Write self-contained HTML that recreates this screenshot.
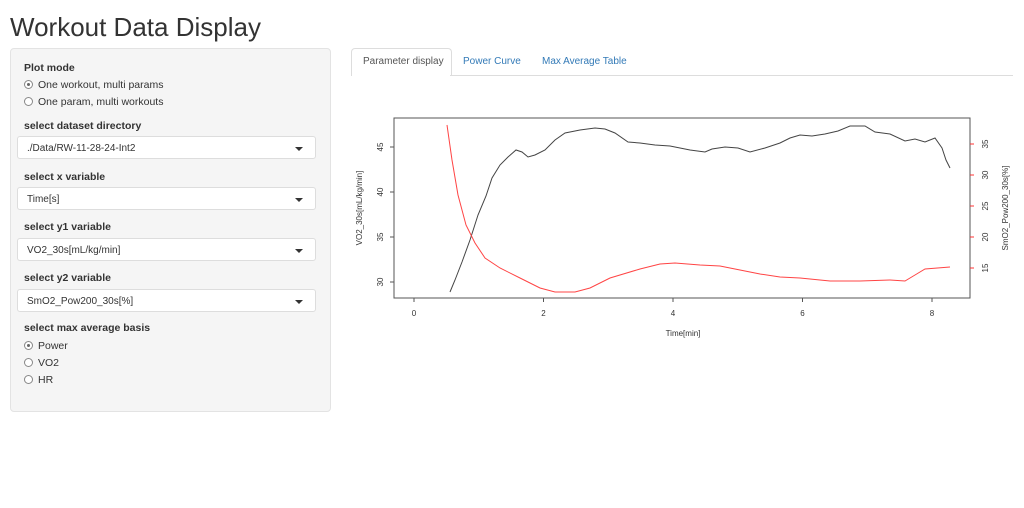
<!DOCTYPE html><html><head><style>
body{margin:0;width:1024px;height:508px;background:#fff;font-family:"Liberation Sans",sans-serif;color:#333;position:relative;overflow:hidden}
.a{position:absolute}
h1{position:absolute;left:10px;top:12px;margin:0;font-size:26px;font-weight:normal;color:#333}
.side{left:10px;top:48px;width:319px;height:362px;background:#f5f5f5;border:1px solid #e3e3e3;border-radius:4px}
.lb{font-size:10.5px;font-weight:bold;left:24px}
.rd{font-size:10.5px;left:24px}
.rd i{display:inline-block;width:7px;height:7px;border:1px solid #888;border-radius:50%;margin-right:5px;vertical-align:-1px;background:#fff;position:relative}
.rd i.on::after{content:"";position:absolute;left:2px;top:2px;width:3px;height:3px;border-radius:50%;background:#666}
.sel{left:17px;width:299px;height:23px;background:#fff;border:1px solid #ddd;border-radius:3px;font-size:10px;line-height:23px;box-sizing:border-box;padding-left:9px}
.sel::after{content:"";position:absolute;right:12px;top:10px;border-left:4px solid transparent;border-right:4px solid transparent;border-top:4px solid #333}
.tab{font-size:10px;top:56px}
</style></head><body>
<h1>Workout Data Display</h1>
<div class="a side"></div>
<div class="a lb" style="top:62px">Plot mode</div>
<div class="a rd" style="top:79px"><i class="on"></i>One workout, multi params</div>
<div class="a rd" style="top:96px"><i></i>One param, multi workouts</div>
<div class="a lb" style="top:120px">select dataset directory</div>
<div class="a sel" style="top:136px">./Data/RW-11-28-24-Int2</div>
<div class="a lb" style="top:171px">select x variable</div>
<div class="a sel" style="top:187px">Time[s]</div>
<div class="a lb" style="top:221px">select y1 variable</div>
<div class="a sel" style="top:238px">VO2_30s[mL/kg/min]</div>
<div class="a lb" style="top:272px">select y2 variable</div>
<div class="a sel" style="top:289px">SmO2_Pow200_30s[%]</div>
<div class="a lb" style="top:322px">select max average basis</div>
<div class="a rd" style="top:340px"><i class="on"></i>Power</div>
<div class="a rd" style="top:357px"><i></i>VO2</div>
<div class="a rd" style="top:374px"><i></i>HR</div>
<div class="a" style="left:351px;top:48px;width:99px;height:27px;border:1px solid #ddd;border-bottom:none;border-radius:4px 4px 0 0;background:#fff"></div>
<div class="a" style="left:450px;top:75px;width:563px;border-top:1px solid #ddd"></div>
<div class="a tab" style="left:363px;color:#555">Parameter display</div>
<div class="a tab" style="left:463px;color:#337ab7">Power Curve</div>
<div class="a tab" style="left:542px;color:#337ab7">Max Average Table</div>
<svg class="a" style="left:0;top:0" width="1024" height="508" font-family="Liberation Sans,sans-serif" font-size="8" fill="#333">
<rect x="394" y="118" width="576" height="180" fill="none" stroke="#555" stroke-width="1"/>
<g stroke="#555"><line x1="414" y1="298" x2="932" y2="298"/>
<line x1="414" y1="298" x2="414" y2="302"/><line x1="543.5" y1="298" x2="543.5" y2="302"/><line x1="673" y1="298" x2="673" y2="302"/><line x1="802.5" y1="298" x2="802.5" y2="302"/><line x1="932" y1="298" x2="932" y2="302"/>
<line x1="394" y1="282" x2="390" y2="282"/><line x1="394" y1="237" x2="390" y2="237"/><line x1="394" y1="192" x2="390" y2="192"/><line x1="394" y1="147" x2="390" y2="147"/></g>
<g stroke="#f33"><line x1="970" y1="268" x2="974" y2="268"/><line x1="970" y1="237" x2="974" y2="237"/><line x1="970" y1="206" x2="974" y2="206"/><line x1="970" y1="175" x2="974" y2="175"/><line x1="970" y1="144" x2="974" y2="144"/></g>
<g text-anchor="middle"><text x="414" y="316">0</text><text x="543.5" y="316">2</text><text x="673" y="316">4</text><text x="802.5" y="316">6</text><text x="932" y="316">8</text>
<text x="683" y="336">Time[min]</text></g>
<g text-anchor="middle"><text transform="translate(383,282) rotate(-90)">30</text><text transform="translate(383,237) rotate(-90)">35</text><text transform="translate(383,192) rotate(-90)">40</text><text transform="translate(383,147) rotate(-90)">45</text>
<text transform="translate(362,208) rotate(-90)">VO2_30s[mL/kg/min]</text>
<text transform="translate(988,268) rotate(-90)">15</text><text transform="translate(988,237) rotate(-90)">20</text><text transform="translate(988,206) rotate(-90)">25</text><text transform="translate(988,175) rotate(-90)">30</text><text transform="translate(988,144) rotate(-90)">35</text>
<text transform="translate(1008,208) rotate(-90)">SmO2_Pow200_30s[%]</text></g>
<polyline fill="none" stroke="#444" stroke-width="1" points="450,292 455,280 462,262 470,240 478,215 486,196 492,178 500,165 508,157 516,150 522,152 528,157 535,155 545,150 555,140 565,133 580,130 595,128 605,129 615,133 628,142 640,143 655,145 670,146 690,150 705,152 712,149 725,147 738,148 750,152 765,148 780,143 790,138 800,135 812,136 825,134 838,131 850,126 865,126 875,132 890,134 905,141 915,139 925,142 935,138 942,148 946,160 950,168"/>
<polyline fill="none" stroke="#f44" stroke-width="1" points="447,125 452,160 458,195 466,225 475,243 485,258 500,268 520,278 540,288 555,292 575,292 590,288 610,278 640,269 660,264 675,263 700,265 720,266 740,270 760,274 780,277 800,278 830,281 860,281 890,280 905,281 915,275 925,269 950,267"/>
</svg>
</body></html>
